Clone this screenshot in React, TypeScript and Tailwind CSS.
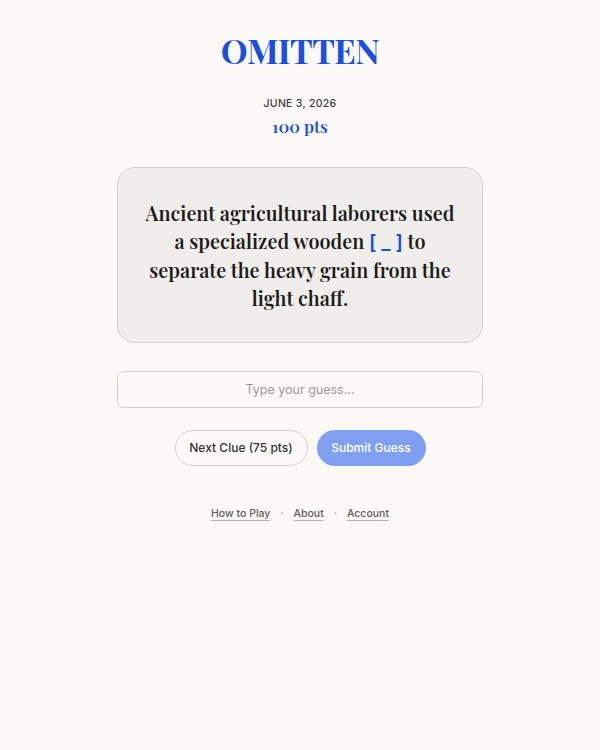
import React, { useState } from "react";

const serif = "font-['Playfair_Display','Liberation_Serif','DejaVu_Serif',serif]";
const sans = "font-['Inter','Liberation_Sans',sans-serif]";

const App = () => {
  const [guess, setGuess] = useState("");

  return (
    <div className={`min-h-[750px] w-full bg-[#faf9f6] ${sans}`}>
      <div className="mx-auto flex w-[366px] flex-col items-center pt-[29px]">
        {/* Header */}
        <h1 className={`${serif} text-[34px] font-bold leading-[42px] tracking-[-0.6px] text-[#1a4fe0]`}>
          OMITTEN
        </h1>
        <p className="mt-[26px] text-[10.5px] font-medium leading-[14px] tracking-[0.3px] text-[#3d3d3d]">
          JUNE 3, 2026
        </p>
        <p className={`${serif} mt-[3px] text-[17px] font-semibold leading-[24px] text-[#1a4fe0]`}>
          100 pts
        </p>

        {/* Clue card */}
        <div className="mt-[29px] flex h-[176px] w-full items-center justify-center rounded-[18px] border border-[#d3d0cb] bg-[#efeeea] px-[24px]">
          <p className={`${serif} text-center text-[19.8px] font-semibold leading-[28px] text-[#1c1c1c]`}>
            Ancient agricultural laborers used a specialized wooden{" "}
            <span className={`${sans} font-semibold text-[#1a4fe0]`}>[ _ ]</span> to separate the heavy grain
            from the light chaff.
          </p>
        </div>

        {/* Guess input */}
        <input
          value={guess}
          onChange={(e) => setGuess(e.target.value)}
          placeholder="Type your guess..."
          className="mt-[28px] h-[37px] w-full rounded-[7px] border border-[#d3d0cb] bg-[#fbfaf8] text-center text-[12.5px] text-[#333] outline-none placeholder:text-[#9a9894]"
        />

        {/* Actions */}
        <div className="mt-[22px] flex gap-[9px]">
          <button className="h-[36px] w-[133px] rounded-full border border-[#d3d0cb] bg-[#fbfaf8] text-[12px] font-medium text-[#333]">
            Next Clue (75 pts)
          </button>
          <button className="h-[36px] w-[109px] rounded-full bg-[#7f9ff1] text-[12px] font-medium text-white">
            Submit Guess
          </button>
        </div>

        {/* Footer links */}
        <nav className="mt-[40px] flex items-center gap-[10px] text-[10.5px] font-medium text-[#5f5e5b]">
          <a className="underline decoration-[#b5b3ae] underline-offset-[3px]">How to Play</a>
          <span className="text-[#9a9894]">·</span>
          <a className="underline decoration-[#b5b3ae] underline-offset-[3px]">About</a>
          <span className="text-[#9a9894]">·</span>
          <a className="underline decoration-[#b5b3ae] underline-offset-[3px]">Account</a>
        </nav>
      </div>
    </div>
  );
};

export default App;
